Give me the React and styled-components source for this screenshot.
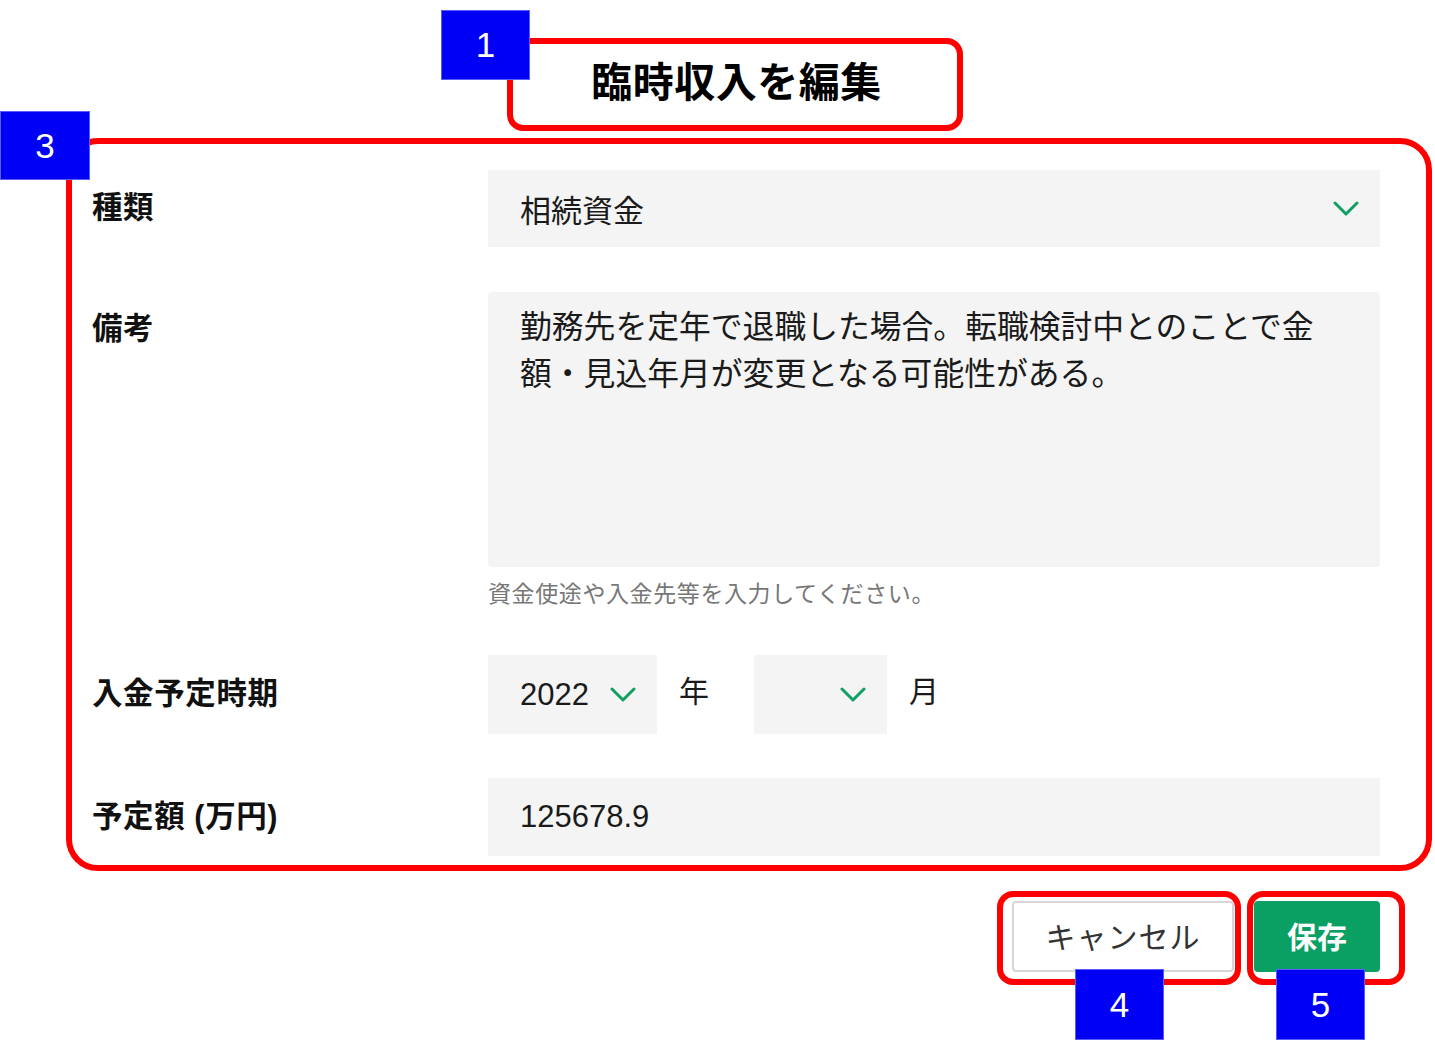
import React from 'react'
import styled, { createGlobalStyle } from 'styled-components'

const GlobalStyle = createGlobalStyle`
    body {
        margin:0;
        background:#fff;
        font-family:"Liberation Sans", "Noto Sans CJK JP", sans-serif;
        color:#111;
    }
`

function Chevron() {
    return (
        <svg width="26" height="16" viewBox="0 0 26 16">
            <polyline points="2,2 13,13 24,2" fill="none" stroke="#10a062" strokeWidth="3" strokeLinecap="round" strokeLinejoin="round" />
        </svg>
    )
}

const marks = [
    { n: 1, box: [507, 38, 456, 93, 16], tag: [441, 10, 89, 70] },
    { n: 3, box: [66, 138, 1366, 733, 32], tag: [0, 111, 90, 69] },
    { n: 4, box: [997, 891, 244, 94, 16], tag: [1075, 969, 89, 71] },
    { n: 5, box: [1247, 891, 158, 94, 16], tag: [1276, 969, 89, 71] },
]

function App() {
    return (
        <Page>
            <GlobalStyle />
            <Header>
                <Title>臨時収入を編集</Title>
            </Header>

            <Row>
                <Label $mt="-3px">種類</Label>
                <Select $w="892px">
                    <Value>相続資金</Value>
                    <Chevron />
                </Select>
            </Row>

            <Row $top $gap="45px">
                <Label $pad="13px">備考</Label>
                <div>
                    <Memo>勤務先を定年で退職した場合。転職検討中とのことで金額・見込年月が変更となる可能性がある。</Memo>
                    <Hint>資金使途や入金先等を入力してください。</Hint>
                </div>
            </Row>

            <Row $gap="47px">
                <Label $mt="-3px">入金予定時期</Label>
                <DateGroup>
                    <Select $w="169px" $h="79px">
                        <Value>2022</Value>
                        <Chevron />
                    </Select>
                    <Unit>年</Unit>
                    <Select $w="133px" $h="79px" $ml="45px">
                        <Value></Value>
                        <Chevron />
                    </Select>
                    <Unit>月</Unit>
                </DateGroup>
            </Row>

            <Row $gap="44px">
                <Label $mt="-2px">予定額 (万円)</Label>
                <Input>125678.9</Input>
            </Row>

            <Buttons>
                <CancelButton>キャンセル</CancelButton>
                <SaveButton>保存</SaveButton>
            </Buttons>

            {marks.map(m => (
                <React.Fragment key={m.n}>
                    <RedBox style={{ left: m.box[0], top: m.box[1], width: m.box[2], height: m.box[3], borderRadius: m.box[4] }} />
                    <Tag style={{ left: m.tag[0], top: m.tag[1], width: m.tag[2], height: m.tag[3] }}>{m.n}</Tag>
                </React.Fragment>
            ))}
        </Page>
    )
}

export default App

const Page = styled.div`
    position:relative;
    width:1435px;
    height:1040px;
    overflow:hidden;
    background:#fff;
`

const Header = styled.div`
    height:170px;
    box-sizing:border-box;
    padding-top:59px;
    display:flex;
    justify-content:center;
    padding-left:38px;
`

const Title = styled.h1`
    margin:0;
    font-size:41px;
    line-height:48px;
    font-weight:700;
    color:#000;
    letter-spacing:0.5px;
`

const Row = styled.div`
    display:flex;
    align-items:${p => p.$top ? 'flex-start' : 'center'};
    margin-top:${p => p.$gap || '0'};
    padding-left:92px;
`

const Label = styled.div`
    width:396px;
    flex:none;
    font-size:30.5px;
    line-height:47px;
    font-weight:700;
    color:#111;
    letter-spacing:0.6px;
    padding-top:${p => p.$pad || '0'};
    margin-top:${p => p.$mt || '0'};
`

const Select = styled.div`
    width:${p => p.$w};
    height:${p => p.$h || '77px'};
    margin-left:${p => p.$ml || '0'};
    box-sizing:border-box;
    background:#f4f4f4;
    display:flex;
    align-items:center;
    justify-content:space-between;
    padding:0 21px 0 32px;
    flex:none;
`

const Value = styled.span`
    font-size:31px;
    color:#1a1a1a;
`

const Memo = styled.div`
    width:892px;
    height:275px;
    box-sizing:border-box;
    background:#f4f4f4;
    border-radius:4px;
    padding:12px 44px 0 32px;
    font-size:31.8px;
    line-height:47px;
    color:#1a1a1a;
`

const Hint = styled.div`
    margin-top:13px;
    font-size:23px;
    line-height:28px;
    color:#777;
    letter-spacing:0.6px;
`

const DateGroup = styled.div`
    display:flex;
    align-items:center;
`

const Unit = styled.span`
    font-size:30px;
    line-height:30px;
    color:#1a1a1a;
    margin-left:22px;
    margin-top:-6px;
`

const Input = styled.div`
    width:892px;
    height:78px;
    box-sizing:border-box;
    background:#f4f4f4;
    display:flex;
    align-items:center;
    padding-left:32px;
    font-size:31px;
    color:#1a1a1a;
`

const Buttons = styled.div`
    display:flex;
    justify-content:flex-end;
    gap:20px;
    margin-top:45px;
    padding-right:55px;
`

const CancelButton = styled.button`
    width:222px;
    height:71px;
    background:#fff;
    border:2px solid #d6d6d6;
    border-radius:4px;
    font-family:"Noto Sans CJK JP", sans-serif;
    font-size:30px;
    color:#333;
    letter-spacing:1px;
    padding:0 0 4px;
`

const SaveButton = styled.button`
    width:126px;
    height:71px;
    background:#0a9f63;
    border:none;
    border-radius:4px;
    font-family:"Noto Sans CJK JP", sans-serif;
    font-size:30px;
    font-weight:700;
    color:#fff;
    padding:0 0 4px;
`

const RedBox = styled.div`
    position:absolute;
    box-sizing:border-box;
    border:6px solid #ff0000;
    pointer-events:none;
`

const Tag = styled.div`
    position:absolute;
    box-sizing:border-box;
    background:#0000f5;
    border:1px solid #5a5aff;
    color:#fff;
    font-family:"Liberation Sans", sans-serif;
    font-size:35px;
    display:flex;
    align-items:center;
    justify-content:center;
`
